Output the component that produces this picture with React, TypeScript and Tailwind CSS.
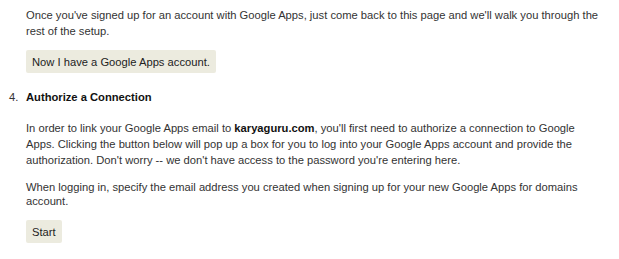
export default function App() {
  return (
    <div className="min-h-screen bg-white text-[11.2px] leading-[16px] text-[#333333]" style={{ fontFamily: '"Liberation Sans", Arial, sans-serif' }}>
      <div className="pl-[26px] pt-[7px]">
        <p className="whitespace-nowrap">
          Once you've signed up for an account with Google Apps, just come back to this page and we'll walk you through the
          <br />
          rest of the setup.
        </p>
        <button className="mt-[11px] h-[23px] rounded-[2px] bg-[#ecebdf] px-[6px] text-[#222222]">
          Now I have a Google Apps account.
        </button>
      </div>

      <div className="mt-[17px] flex">
        <div className="w-[25px] pl-[9px] shrink-0 leading-[15px]">4.</div>
        <div className="pl-[1px]">
          <h3 className="font-bold leading-[15px] text-[#111111]">Authorize a Connection</h3>
          <p className="mt-[15px] whitespace-nowrap">
            In order to link your Google Apps email to <b className="text-[#111111]">karyaguru.com</b>, you'll first need to authorize a connection to Google
            <br />
            Apps. Clicking the button below will pop up a box for you to log into your Google Apps account and provide the
            <br />
            authorization. Don't worry -- we don't have access to the password you're entering here.
          </p>
          <p className="mt-[12px] whitespace-nowrap leading-[14px]">
            When logging in, specify the email address you created when signing up for your new Google Apps for domains
            <br />
            account.
          </p>
          <button className="mt-[12px] h-[23px] rounded-[2px] bg-[#ecebdf] px-[6px] text-[#222222]">Start</button>
        </div>
      </div>
    </div>
  );
}
